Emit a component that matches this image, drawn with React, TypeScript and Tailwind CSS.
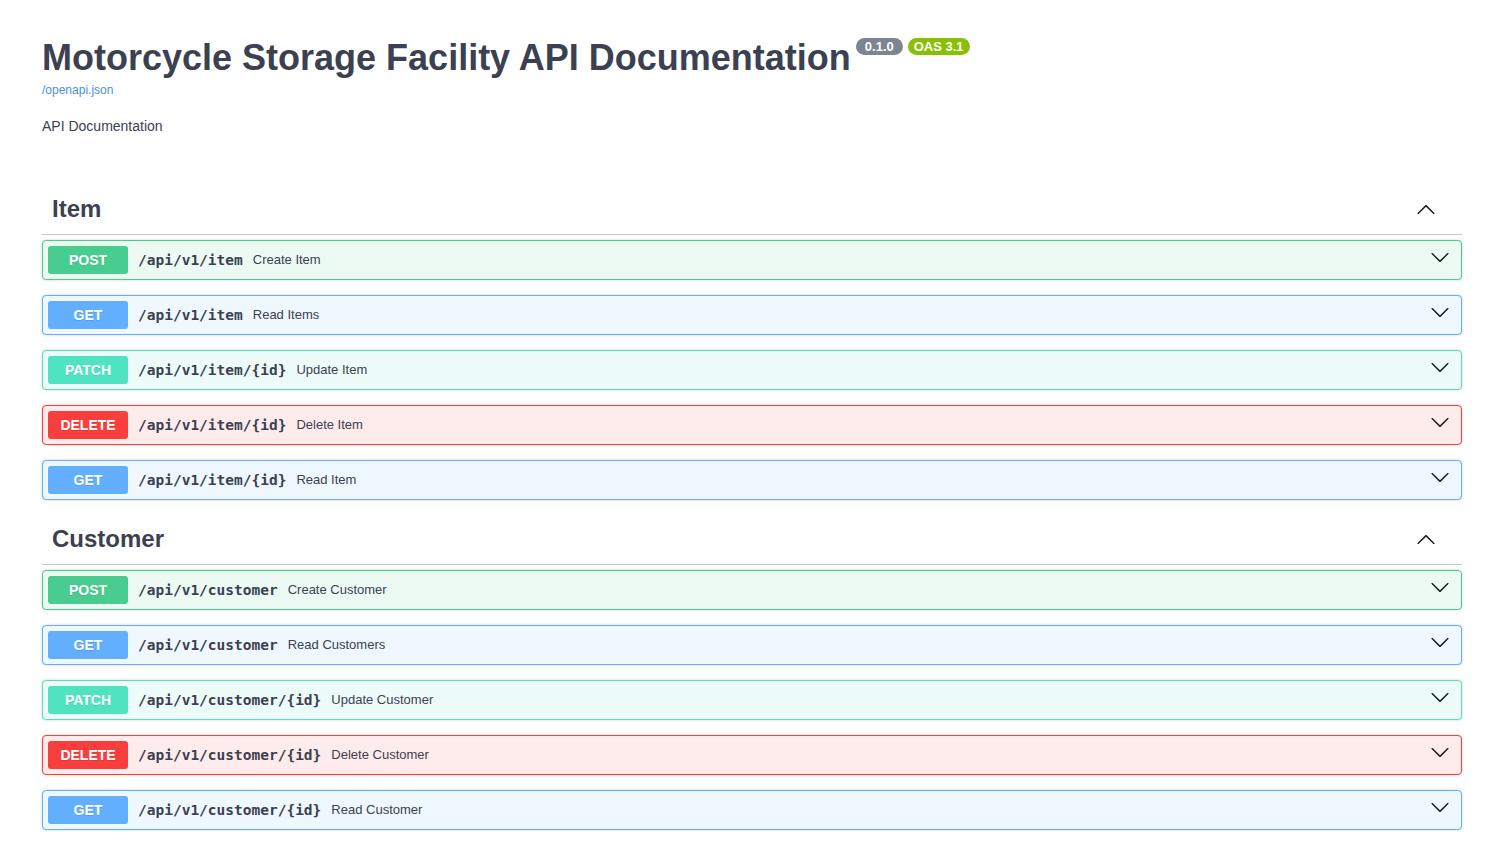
import React from "react";

type Method = "POST" | "GET" | "PATCH" | "DELETE";

const methodStyles: Record<Method, { row: string; badge: string }> = {
  POST: { row: "border-[#49cc90] bg-[#edfaf4]", badge: "bg-[#49cc90]" },
  GET: { row: "border-[#61affe] bg-[#eff7ff]", badge: "bg-[#61affe]" },
  PATCH: { row: "border-[#50e3c2] bg-[#edfcf9]", badge: "bg-[#50e3c2]" },
  DELETE: { row: "border-[#f93e3e] bg-[#feebeb]", badge: "bg-[#f93e3e]" },
};

const sections: { tag: string; ops: { method: Method; path: string; summary: string }[] }[] = [
  {
    tag: "Item",
    ops: [
      { method: "POST", path: "/api/v1/item", summary: "Create Item" },
      { method: "GET", path: "/api/v1/item", summary: "Read Items" },
      { method: "PATCH", path: "/api/v1/item/{id}", summary: "Update Item" },
      { method: "DELETE", path: "/api/v1/item/{id}", summary: "Delete Item" },
      { method: "GET", path: "/api/v1/item/{id}", summary: "Read Item" },
    ],
  },
  {
    tag: "Customer",
    ops: [
      { method: "POST", path: "/api/v1/customer", summary: "Create Customer" },
      { method: "GET", path: "/api/v1/customer", summary: "Read Customers" },
      { method: "PATCH", path: "/api/v1/customer/{id}", summary: "Update Customer" },
      { method: "DELETE", path: "/api/v1/customer/{id}", summary: "Delete Customer" },
      { method: "GET", path: "/api/v1/customer/{id}", summary: "Read Customer" },
    ],
  },
];

const ArrowDown = ({ className }: { className?: string }) => (
  <svg viewBox="0 0 20 20" width="20" height="20" className={className} fill="#1b1b1b">
    <path d="M17.418 6.109c.272-.268.709-.268.979 0s.271.701 0 .969l-7.908 7.83c-.27.268-.707.268-.979 0l-7.908-7.83c-.27-.268-.27-.701 0-.969.271-.268.709-.268.979 0L10 13.25l7.418-7.141z" />
  </svg>
);

const ArrowUp = ({ className }: { className?: string }) => (
  <svg viewBox="0 0 20 20" width="20" height="20" className={className} fill="#1b1b1b">
    <path d="M17.418 14.908c.272.268.709.268.979 0s.271-.701 0-.969l-7.908-7.83c-.27-.268-.707-.268-.979 0l-7.908 7.83c-.27.268-.27.701 0 .969.271.268.709.268.979 0L10 7.767l7.418 7.141z" />
  </svg>
);

const Operation = ({ method, path, summary }: { method: Method; path: string; summary: string }) => {
  const s = methodStyles[method];
  return (
    <div className={`mb-[15px] rounded border shadow-[0_0_3px_rgba(0,0,0,0.19)] ${s.row}`}>
      <div className="flex items-center p-[5px]">
        <span
          className={`min-w-[80px] rounded-[3px] py-1.5 text-center text-sm leading-4 font-bold text-white [text-shadow:0_1px_0_rgba(0,0,0,0.1)] ${s.badge}`}
        >
          {method}
        </span>
        <span className="translate-y-px px-[10px] font-['DejaVu_Sans_Mono',monospace] text-[14.5px] font-bold text-[#3b4151]">
          {path}
        </span>
        <span className="flex-1 text-[13px] text-[#3b4151]">{summary}</span>
        <ArrowDown className="mt-px mr-[6px] self-start" />
      </div>
    </div>
  );
};

export default function App() {
  return (
    <div className="min-h-screen bg-white font-['Liberation_Sans',Arial,sans-serif] text-[#3b4151]">
      <div className="mx-auto max-w-[1460px] px-5 pt-[37px]">
        <div className="flex items-start">
          <h2 className="text-[36px] leading-[41px] font-bold text-[#3b4151]">
            Motorcycle Storage Facility API Documentation
          </h2>
          <span className="mt-px ml-[5px] rounded-full bg-[#7d8492] px-[9px] py-px text-[13px] leading-[15px] font-bold text-white">
            0.1.0
          </span>
          <span className="mt-px ml-[5px] rounded-full bg-[#89bf04] px-[6px] py-px text-[13px] leading-[15px] font-bold text-white">
            OAS 3.1
          </span>
        </div>
        <a className="mt-[5px] block text-xs leading-[14px] text-[#4990e2]">/openapi.json</a>
        <p className="mt-[19px] text-sm leading-5 text-[#3b4151]">API Documentation</p>

        <div className="mt-[49px]">
          {sections.map((sec) => (
            <div key={sec.tag}>
              <div className="mb-[5px] flex items-center border-b border-[#c4c6cb] pt-[9px] pr-5 pb-[11px] pl-[10px]">
                <h3 className="flex-1 text-2xl leading-[29px] font-bold text-[#3b4151]">{sec.tag}</h3>
                <ArrowUp className="mr-[6px]" />
              </div>
              {sec.ops.map((op) => (
                <Operation key={op.method + op.path} {...op} />
              ))}
            </div>
          ))}
        </div>
      </div>
    </div>
  );
}
